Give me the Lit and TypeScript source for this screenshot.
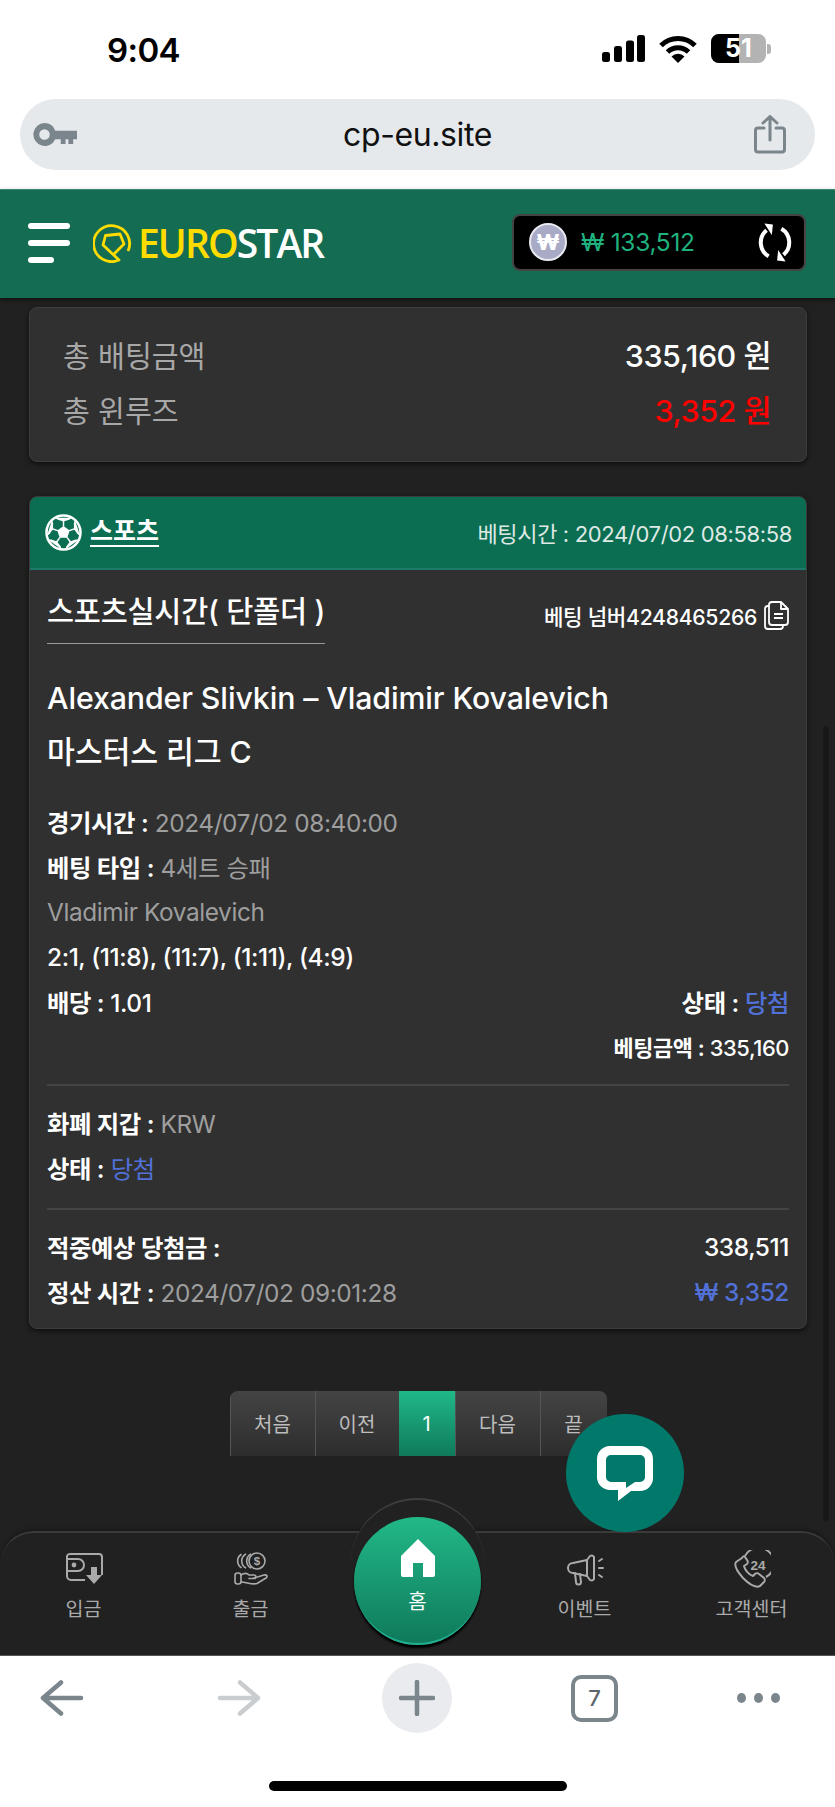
import { LitElement, html, css, svg } from "lit";
import { customElement } from "lit/decorators.js";

const navIcons = {
  wallet: svg`<svg viewBox="0 0 38 34" width="38" height="34" fill="none" stroke="#aaa" stroke-width="2"><path d="M20 28H6a4 4 0 0 1-4-4V4a3 3 0 0 1 3-2h29a3 3 0 0 1 3 3v18"/><path d="M3 7h10a6 6 0 0 1 6 6v0a6 6 0 0 1-6 6H3"/><circle cx="9" cy="13" r="2.4" fill="#aaa" stroke="none"/><path d="M26 15h6v8h5l-8 9-8-9h5z" fill="#aaa" stroke="none"/></svg>`,
  coins: svg`<svg viewBox="0 0 34 34" width="34" height="34" fill="none" stroke="#aaa" stroke-width="1.6" stroke-linecap="round" stroke-linejoin="round"><circle cx="23" cy="9" r="8"/><path d="M16.500 2.200a8 8 0 0 0 0 13.600M11.500 2.200a8 8 0 0 0 0 13.600"/><path d="M7 2.500a8 8 0 0 0 0 13"/><text x="23" y="13" font-size="11.500" font-weight="700" fill="#aaa" stroke="none" text-anchor="middle" font-family="Liberation Sans">$</text><rect x="1" y="21" width="6" height="11" rx="2.500"/><path d="M7 23c3-2 6-2 8 0h5c2.500 0 2.500 3.500 0 3.500h-5"/><path d="M20 26l10-3c3-.5 4 1.500 2 3l-9 5.500c-4 1.500-10-1-16-1.500"/></svg>`,
  mega: svg`<svg viewBox="0 0 38 34" width="38" height="34" fill="none" stroke="#aaa" stroke-width="2" stroke-linejoin="round" stroke-linecap="round"><path d="M7 11l14-3v16L7 21a5 5 0 0 1 0-10z"/><path d="M21 8l3-4a3 3 0 0 1 4 1v22a3 3 0 0 1-4 1l-3-4"/><path d="M9 21l1 9a2.500 2.500 0 0 0 5 0l-1-8"/><path d="M33 9l3-2M33 16h4M33 23l3 2" /></svg>`,
  phone: svg`<svg viewBox="0 0 38 38" width="38" height="38" fill="none" stroke="#aaa" stroke-width="2" stroke-linejoin="round"><path d="M9 8L3 12c-2 3 0 8 7 16 7 7 13 10 17 8l4-4c1-1 1-3 0-4l-5-4c-1-1-3-1-4 0l-2 2c-4-1-8-6-9-10l3-2c1-1 1-3 0-4l-2-3c-1-1-2-1-3 1z"/><path d="M12 6A15.500 15.500 0 1 1 33 27"/><text x="25" y="20" font-size="13.500" font-weight="700" fill="#aaa" stroke="none" text-anchor="middle" font-family="Liberation Sans">24</text></svg>`,
};

const polar = (r: number, deg: number) => {
  const a = (deg * Math.PI) / 180;
  return `${(18.5 + r * Math.cos(a)).toFixed(2)},${(18.5 + r * Math.sin(a)).toFixed(2)}`;
};
const ballAngles = [-90, -18, 54, 126, 198];
const ball = svg`<svg width="37" height="37" viewBox="0 0 37 37" fill="#fff" stroke="none">
  <circle cx="18.5" cy="18.5" r="17" fill="none" stroke="#fff" stroke-width="2.5"/>
  <polygon points="${ballAngles.map((a) => polar(6.5, a)).join(" ")}"/>
  ${ballAngles.map(
    (a) => svg`
      <polygon points="${polar(11, a)} ${polar(14, a - 24)} ${polar(17, a - 30)} ${polar(17, a + 30)} ${polar(14, a + 24)}"/>
      <line x1="${polar(6, a).split(",")[0]}" y1="${polar(6, a).split(",")[1]}" x2="${polar(12, a).split(",")[0]}" y2="${polar(12, a).split(",")[1]}" stroke="#fff" stroke-width="1.5"/>
    `
  )}
</svg>`;

@customElement("app-root")
export class AppRoot extends LitElement {
  static styles = css`
    :host {
      display: flex;
      flex-direction: column;
      position: relative;
      width: 835px;
      height: 1807px;
      overflow: hidden;
      background: #212121;
      font-family: Inter, "Noto Sans CJK KR", "Liberation Sans", sans-serif;
      color: #fff;
    }
    * { box-sizing: border-box; }
    svg { display: block; flex: none; }

    /* browser top */
    .top { height: 189px; flex: none; background: #fff; display: flex; flex-direction: column; }
    .status { height: 99px; display: flex; align-items: flex-start; padding: 32px 64px 0 107px; justify-content: space-between; }
    .time { font-size: 33px; font-weight: 600; line-height: 36px; color: #000; letter-spacing: -0.6px; }
    .sys { display: flex; align-items: center; gap: 14px; margin-top: 2px; }
    .batt { width: 55px; height: 29px; border-radius: 8px; overflow: hidden; display: flex; position: relative; background: #b3b3b3; }
    .batt i { display: block; width: 28px; background: #000; }
    .batt span { position: absolute; inset: 0; text-align: center; font-size: 25px; line-height: 29px; font-weight: 700; color: #fff; font-style: normal; }
    .nub { width: 4px; height: 10px; background: #b3b3b3; border-radius: 0 3px 3px 0; margin-left: -13px; }
    .url {
      margin: 0 20px; height: 71px; border-radius: 36px; background: #e6e9ec;
      display: flex; align-items: center; justify-content: space-between; padding: 0 29px 0 13px; position: relative;
    }
    .url b { position: absolute; left: 0; right: 0; text-align: center; font-weight: 400; font-size: 32px; color: #111; letter-spacing: -0.4px; }

    /* site header */
    .hdr {
      height: 109px; flex: none; background: #146c52; border-top: 1px solid #3d8a72;
      display: flex; align-items: center; padding: 0 29px 0 28px;
      box-shadow: 0 2px 4px rgba(0,0,0,.5); z-index: 2;
    }
    .burger { width: 42px; display: flex; flex-direction: column; gap: 11px; margin-right: 23px; margin-top: -2px; }
    .burger i { display: block; height: 6px; border-radius: 3px; background: #fff; }
    .burger i:last-child { width: 26px; }
    .logo { display: flex; align-items: center; gap: 6px; margin-top: -2px; }
    .word { font-family: "Open Sans", sans-serif; font-size: 39px; font-weight: 600; line-height: 40px; letter-spacing: -1.9px; color: #fff; }
    .word em { font-style: normal; color: #ffdc00; }
    .bal {
      margin-left: auto; width: 294px; height: 57px; margin-top: -4px; background: #000; border: 2px solid #444; border-radius: 8px;
      display: flex; align-items: center; padding: 0 11px 0 15px;
    }
    .won { width: 38px; height: 38px; border-radius: 50%; background: #a9abc6; border: 2px solid #e8e8f0; display: flex; align-items: center; justify-content: center; font-size: 22px; font-weight: 800; color: #fff; }
    .bal span { margin-left: 14px; font-size: 24.5px; color: #1fb27f; letter-spacing: -0.3px; }
    .bal svg.r { margin-left: auto; }

    /* content */
    .main { flex: 1; min-height: 0; padding: 9px 28px 0 29px; display: flex; flex-direction: column; position: relative; }
    .card { background: #303030; border-radius: 8px; border: 1px solid #3d3d3d; box-shadow: 0 2px 5px rgba(0,0,0,.6); }
    .sum { height: 155px; padding: 24px 35px 0 33px; display: flex; flex-direction: column; gap: 11px; }
    .sum div { display: flex; justify-content: space-between; align-items: center; height: 44px; }
    .sum .k { font-size: 29.2px; color: #a8a8a8; }
    .sum .v { font-size: 30.5px; font-weight: 500; letter-spacing: -0.5px; }
    .sum .red { color: #ff0000; }

    .bet { height: 833px; margin-top: 34px; overflow: hidden; }
    .bet-h { height: 73px; background: #0b6e52; border-bottom: 2px solid #1c7a6a; display: flex; align-items: center; padding: 0 14px 0 15px; }
    .bet-h u { margin-left: 8px; font-size: 25px; font-weight: 600; text-underline-offset: 5px; margin-top: -8px; }
    .bet-h span { margin-left: auto; font-size: 22px; color: #dfe9e5; letter-spacing: -0.35px; margin-top: -2px; }
    .bet-b { padding: 0 17px; }
    .title-row { display: flex; justify-content: space-between; align-items: center; height: 73px; }
    .ttl { height: 74px; padding-top: 21px; font-size: 29.4px; font-weight: 500; line-height: 42px; border-bottom: 1px solid #999; letter-spacing: -0.2px; }
    .no { display: flex; align-items: center; gap: 7px; font-size: 21.2px; font-weight: 500; letter-spacing: -0.3px; margin-top: 17px; }
    h2 { margin: 0; font-weight: 500; font-size: 30.3px; line-height: 54px; letter-spacing: -0.1px; }
    .names { margin-top: 28px; margin-bottom: 20px; }
    .r { display: flex; justify-content: space-between; align-items: center; height: 45px; font-size: 24.4px; letter-spacing: -0.4px; }
    .r b { font-weight: 600; }
    .small { font-size: 21.9px; }
    .g { color: #9e9e9e; }
    .bl { color: #5170d8; }
    .m { font-weight: 500; }
    hr { border: 0; border-top: 2px solid #444; margin: 15px 0 14px; }
    hr.b { margin: 18px 0 14px; }

    .pager { display: flex; align-self: center; height: 65px; margin-top: 62px; width: 377px; border-radius: 8px 8px 0 0; overflow: hidden; flex: none; }
    .pager a { display: flex; align-items: center; justify-content: center; font-size: 20px; color: #bdbdbd; background: linear-gradient(#444, #2d2d2d); border-left: 1px solid #555; }
    .pager a.on { color: #fff; background: linear-gradient(#20b888, #0f7a5b); border-left: 0; }
    .w85 { width: 85px; } .w84 { width: 84px; } .w56 { width: 56px; } .w67 { width: 67px; }

    .scroll { position: absolute; left: 823px; top: 726px; width: 6px; height: 795px; border-radius: 3px; background: #181818; }

    .chat {
      position: absolute; left: 566px; top: 1414px; width: 118px; height: 118px; border-radius: 50%;
      background: #00796b; display: flex; align-items: center; justify-content: center; z-index: 5;
    }

    /* site bottom nav */
    .nav {
      height: 124px; flex: none; background: #212121; border-top: 2px solid #3a3a3a; border-radius: 34px 34px 0 0;
      position: relative; display: grid; grid-template-columns: repeat(5, 1fr); z-index: 3;
      box-shadow: 0 -2px 4px rgba(0,0,0,.3);
    }
    .nav a { display: flex; flex-direction: column; align-items: center; font-size: 19.5px; color: #aaa; padding-top: 17px; }
    .nav a svg { height: 38px; margin-bottom: 5px; }
    .arc { position: absolute; left: 350px; top: -35px; width: 135px; height: 70px; border-radius: 68px 68px 0 0; background: #212121; border-top: 2px solid #3f3f3f; }
    .home {
      position: absolute; left: 354px; top: -16px; width: 127px; height: 128px; border-radius: 50%;
      background: linear-gradient(#22b888, #0f7a5b); border-bottom: 2px solid #20b090;
      box-shadow: 0 3px 2px #000;
      display: flex; flex-direction: column; align-items: center; padding-top: 22px; font-size: 20px; color: #fff;
    }
    .home svg { margin-bottom: 9px; }

    /* browser bottom */
    .tools { height: 152px; flex: none; background: #fff; display: flex; flex-direction: column; position: relative; z-index: 4; border-top: 1px solid #555; }
    .tool-row { display: grid; grid-template-columns: 177px 165px 189px 166px auto; align-items: center; height: 84px; padding-left: 40px; }
    .plus { width: 70px; height: 70px; border-radius: 50%; background: #e9ebee; display: flex; align-items: center; justify-content: center; }
    .tabs { width: 47px; height: 47px; border: 4px solid #7b858c; border-radius: 10px; display: flex; align-items: center; justify-content: center; font-size: 22px; font-weight: 500; color: #5e666c; }
    .dots { display: flex; gap: 8px; }
    .dots i { display: block; width: 9px; height: 10px; border-radius: 50%; background: #7b858c; }
    .indicator { width: 298px; height: 10px; border-radius: 5px; background: #000; align-self: center; margin-top: 41px; }
  `;

  render() {
    return html`
      <div class="top">
        <div class="status">
          <div class="time">9:04</div>
          <div class="sys">
            <svg width="43" height="27" viewBox="0 0 43 27" fill="#000"><rect x="0" y="17" width="8" height="10" rx="2.500"/><rect x="12" y="11" width="8" height="16" rx="2.500"/><rect x="24" y="5.500" width="8" height="21.500" rx="2.500"/><rect x="35" y="0" width="8" height="27" rx="2.500"/></svg>
            <svg width="38" height="28" viewBox="0 0 38 28" fill="none" stroke="#000" stroke-width="5"><path d="M2 10.500a24 24 0 0 1 34 0"/><path d="M8.500 17a15 15 0 0 1 21 0"/><path d="M19 28l-6.500-6.500a9 9 0 0 1 13 0z" fill="#000" stroke="none"/></svg>
            <div class="batt"><i></i><span>51</span></div>
            <div class="nub"></div>
          </div>
        </div>
        <div class="url">
          <svg width="44" height="23" viewBox="0 0 46 24" fill="#7b858c"><path fill-rule="evenodd" d="M12 0a12 12 0 0 1 11.300 8H46v9h-4v5h-5v-5h-3v5h-5v-5h-5.700A12 12 0 1 1 12 0zm0 6.500a5.500 5.500 0 1 0 0 11 5.500 5.500 0 0 0 0-11z"/></svg>
          <b>cp-eu.site</b>
          <svg width="32" height="39" viewBox="0 0 32 39" fill="none" stroke="#7b858c" stroke-width="3" stroke-linejoin="round" stroke-linecap="round"><path d="M10 13H4a2.500 2.500 0 0 0-2.500 2.500v19A2.500 2.500 0 0 0 4 37h24a2.500 2.500 0 0 0 2.500-2.500v-19A2.500 2.500 0 0 0 28 13h-6"/><path d="M16 25V2M9 8l7-6.500L23 8"/></svg>
        </div>
      </div>

      <header class="hdr">
        <div class="burger"><i></i><i></i><i></i></div>
        <div class="logo">
          <svg width="39" height="40" viewBox="0 0 39 40" fill="none" stroke="#ffdc00" stroke-width="2.800" stroke-linejoin="round"><path d="M35 28A18 18 0 1 0 26 37L10 22 12.500 12.500 27 11 31 21 21 31"/></svg>
          <div class="word"><em>EURO</em>STAR</div>
        </div>
        <div class="bal">
          <div class="won">₩</div>
          <span>₩ 133,512</span>
          <svg class="r" width="36" height="37" viewBox="0 0 34 36" fill="none" stroke="#fff" stroke-width="3.800"><path d="M9 6.500A15 15 0 0 0 11 31"/><path d="M25 29.500A15 15 0 0 0 23 5"/><path d="M7 0l8 1-1 10z" fill="#fff" stroke="none"/><path d="M27 36l-8-1 1-10z" fill="#fff" stroke="none"/></svg>
        </div>
      </header>

      <main class="main">
        <section class="card sum">
          <div><span class="k">총 배팅금액</span><span class="v">335,160 원</span></div>
          <div><span class="k">총 윈루즈</span><span class="v red">3,352 원</span></div>
        </section>

        <section class="card bet">
          <div class="bet-h">
            ${ball}
            <u>스포츠</u>
            <span>베팅시간 : 2024/07/02 08:58:58</span>
          </div>
          <div class="bet-b">
            <div class="title-row">
              <div class="ttl">스포츠실시간( 단폴더 )</div>
              <div class="no">베팅 넘버4248465266
                <svg width="25" height="29" viewBox="0 0 25 29" fill="none" stroke="#fff" stroke-width="1.800" stroke-linejoin="round"><path d="M5 5H4a3 3 0 0 0-3 3v17a3 3 0 0 0 3 3h12a3 3 0 0 0 3-3v-1"/><path d="M5 4a3 3 0 0 1 3-3h9l7 7v13a3 3 0 0 1-3 3H8a3 3 0 0 1-3-3z"/><path d="M17 1v7h7M10 13h9M10 17h9"/></svg>
              </div>
            </div>
            <div class="names">
              <h2>Alexander Slivkin – Vladimir Kovalevich</h2>
              <h2>마스터스 리그 C</h2>
            </div>
            <div class="r"><span><b>경기시간 :</b> <span class="g">2024/07/02 08:40:00</span></span></div>
            <div class="r"><span><b>베팅 타입 :</b> <span class="g">4세트 승패</span></span></div>
            <div class="r g"><span>Vladimir Kovalevich</span></div>
            <div class="r m"><span>2:1, (11:8), (11:7), (1:11), (4:9)</span></div>
            <div class="r m"><span><b>배당 :</b> 1.01</span><span><b>상태 :</b> <span class="bl">당첨</span></span></div>
            <div class="r m"><span></span><span class="small"><b>베팅금액 :</b> 335,160</span></div>
            <hr />
            <div class="r"><span><b>화폐 지갑 :</b> <span class="g">KRW</span></span></div>
            <div class="r"><span><b>상태 :</b> <span class="bl">당첨</span></span></div>
            <hr class="b" />
            <div class="r m"><span><b>적중예상 당첨금 :</b></span><span>338,511</span></div>
            <div class="r"><span><b>정산 시간 :</b> <span class="g">2024/07/02 09:01:28</span></span><span class="bl m">₩ 3,352</span></div>
          </div>
        </section>

        <div class="pager">
          <a class="w85">처음</a><a class="w84">이전</a><a class="on w56">1</a><a class="w85">다음</a><a class="w67">끝</a>
        </div>
      </main>

      <div class="scroll"></div>

      <div class="chat">
        <svg width="56" height="55" viewBox="0 0 56 55" fill="#fff"><path fill-rule="evenodd" d="M13 0h30a13 13 0 0 1 13 13v19a13 13 0 0 1-13 13H34L21 55V44h-8A13 13 0 0 1 0 32V13A13 13 0 0 1 13 0zm1 9a5 5 0 0 0-5 5v17a5 5 0 0 0 5 5h15v6l9-6h5a5 5 0 0 0 5-5V14a5 5 0 0 0-5-5z"/></svg>
      </div>

      <nav class="nav">
        <div class="arc"></div>
        <a>${navIcons.wallet}입금</a>
        <a>${navIcons.coins}출금</a>
        <span></span>
        <a>${navIcons.mega}이벤트</a>
        <a>${navIcons.phone}고객센터</a>
        <div class="home">
          <svg width="34" height="38" viewBox="0 0 34 38" fill="#fff"><path fill-rule="evenodd" d="M17 0l17 17v19a2 2 0 0 1-2 2H22V24H12v14H2a2 2 0 0 1-2-2V17z"/></svg>
          홈
        </div>
      </nav>

      <footer class="tools">
        <div class="tool-row">
          <svg width="44" height="36" viewBox="0 0 44 36" fill="none" stroke="#7b858c" stroke-width="4.500" stroke-linecap="round" stroke-linejoin="round"><path d="M41 18H3M21 2.500L3 18l18 15.500"/></svg>
          <svg width="44" height="36" viewBox="0 0 44 36" fill="none" stroke="#c9cdd0" stroke-width="4.500" stroke-linecap="round" stroke-linejoin="round"><path d="M3 18h38M23 2.500L41 18 23 33.500"/></svg>
          <div class="plus"><svg width="36" height="36" viewBox="0 0 36 36" stroke="#7b858c" stroke-width="4.500" stroke-linecap="round"><path d="M18 2v32M2 18h32"/></svg></div>
          <div class="tabs">7</div>
          <div class="dots"><i></i><i></i><i></i></div>
        </div>
        <div class="indicator"></div>
      </footer>
    `;
  }
}
